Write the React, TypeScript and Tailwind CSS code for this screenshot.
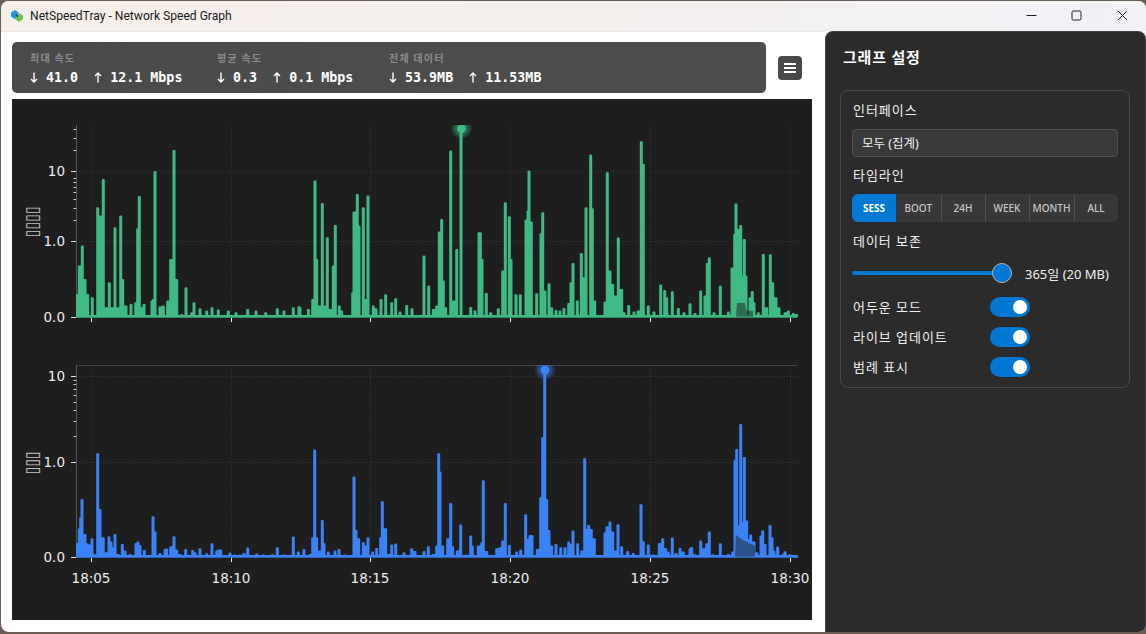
import React from "react";

type P = [number, number];
const map = (ox: number, oy: number, a: number[]): P[] => {
  const r: P[] = [];
  for (let i = 0; i < a.length; i += 2) r.push([ox + a[i] / 3, oy + a[i + 1] / 3]);
  return r;
};

const greenPts: P[] = [
  ...map(0, 200, [230,285,238,200,247,140,255,240,263,285,277,295,293,25,303,50,310,-60,320,325,328,250,335,325,345,85,353,325,362,50,368,240,378,320,393,315,407,310,413,88,418,-9,425,325,432,315,456,305,460,300,465,-84,480,322,490,320,503,305,512,180,522,-147,530,240,545,345,558,265,575,340,582,310,600,328,620,335,636,325,655,332,685,335,708,340,743,330,768,335,797,340,832,328,852,335,880,325,897,322]),
  ...map(300, 110, [0,595,25,600,38,570,45,215,50,450,60,590,67,282,72,590,82,385,90,600,100,470,106,348,118,590,125,605,158,550,162,308,172,255,177,350,190,295,197,570,204,260,220,590,228,598,243,570,257,556,275,580,287,568,300,608,320,588,336,598,372,440,386,530,400,600,410,590,418,368,425,330,430,515,437,595,452,125,460,575,470,420,483,20,512,594,525,605,537,370,541,370,546,450,559,552,572,610,595,598,608,485,616,280,628,322,633,450,648,556,661,556,678,332,684,305,687,185,694,338,710,553,723,373,728,310,735,545,747,523,755,595,768,603,780,605,792,597,806,582,813,520,819,462,832,575,844,432,852,505,858,295,872,137,877,298,884,575]),
  ...map(600, 110, [15,578,22,190,30,485,38,525,45,560,55,386,65,540,72,610,86,588,102,608,114,605,124,97,130,165,145,590,162,608,182,527,194,543,200,565,217,547,235,597,252,610,270,583,285,612,302,545,315,560,322,462,328,446,342,610,361,530,385,608,396,476,404,375,408,284,415,360,422,348,428,500,433,390,438,500,450,565,457,546,462,580,475,610,490,435,500,595,511,436,518,520,528,565,537,595,555,610,565,605,580,612,590,615]),
];

const bluePts: P[] = [
  ...map(0, 400, [232,432,238,388,242,355,246,300,250,440,255,405,262,433,270,437,276,418,285,466,293,163,300,330,310,415,320,460,327,412,333,428,338,445,345,405,355,465,367,435,375,455,390,465,408,432,414,428,420,438,433,453,445,468,459,352,465,398,480,462,495,450,500,449,512,442,522,412,530,452,540,465,557,450,578,453,585,460,600,448,620,463,636,433,650,455,655,452,662,452,690,461,703,467,720,467,732,462,743,446,770,464,790,467,817,466,832,445,850,467,880,413,895,458]),
  ...map(300, 400, [12,450,30,465,38,415,44,152,50,415,60,455,67,363,72,432,85,458,105,455,117,450,135,467,162,233,168,393,176,418,190,430,197,440,204,415,218,458,230,447,242,415,247,307,257,388,265,465,275,437,287,434,312,460,335,448,345,456,372,456,385,442,400,465,410,440,416,163,420,218,428,440,443,418,452,312,458,442,472,455,482,377,500,467,512,410,517,440,535,440,545,430,550,244,560,456,590,448,600,445,608,425,616,312,628,438,650,458,662,452,677,346,683,420,690,408,696,408,712,450,722,295,728,115,734,-90,740,300,747,393,755,440,768,435,782,445,795,445,806,428,812,435,819,395,833,433,845,455,854,178,860,390,866,378,874,390,883,418]),
  ...map(600, 400, [15,400,21,382,30,368,38,398,45,455,54,376,65,442,83,456,100,462,123,316,130,427,145,437,160,467,178,432,188,418,197,447,205,458,217,416,228,462,240,447,250,458,270,448,275,444,285,466,302,425,310,448,320,433,328,398,340,466,361,433,385,465,398,458,405,183,410,150,415,380,422,75,428,370,433,174,440,365,445,420,452,407,462,428,470,460,483,410,488,394,495,435,510,378,516,415,522,455,533,443,550,465,555,457,570,466,585,468,590,470]),
];

function build(pts: P[], base: number): P[] {
  const s = [...pts].sort((a, b) => a[0] - b[0]);
  const out: P[] = [[77, base]];
  let prev: P = [77, base - 1];
  const low = base - 1;
  for (const p of s) {
    if (p[0] - prev[0] > 3.4) {
      out.push([prev[0] + 0.4, low]);
      out.push([p[0] - 0.4, low]);
      out.push([p[0] - 0.4, p[1]]);
    } else if (p[1] < prev[1]) {
      out.push([p[0] - 0.4, prev[1]]);
      out.push([p[0] - 0.4, p[1]]);
    } else {
      out.push([prev[0] + 0.4, p[1]]);
      out.push([p[0] - 0.4, p[1]]);
    }
    out.push([p[0] + 0.4, p[1]]);
    prev = p;
  }
  out.push([prev[0] + 0.4, low], [797, low], [797, base]);
  return out;
}

const str = (p: P[]) => p.map((q) => `${q[0].toFixed(1)},${q[1].toFixed(1)}`).join(" ");

const DJ = "'DejaVu Sans', sans-serif";
const KR = "'Noto Sans', 'Noto Sans CJK KR', sans-serif";
const gridXs = [91.5, 231.5, 370.5, 510.5, 650.5, 790.5];

function Series(p: {
  id: string; top: number; base: number; color: string; pts: P[]; labels: [number, string][];
  minors: number[]; frame: boolean; tofu: string; tofuY: number; marker: P; xlabels: boolean; tofuLen: number; shade: string;
}) {
  const line = build(p.pts, p.base);
  return (
    <g>
      <clipPath id={p.id}><rect x="76" y={p.top} width="722" height={p.base - p.top + 2} /></clipPath>
      {gridXs.map((x) => (
        <line key={x} x1={x} x2={x} y1={p.top} y2={p.base} stroke="#383838" strokeWidth="1" strokeDasharray="1 2" />
      ))}
      {p.labels.slice(0, -1).map(([y]) => (
        <line key={y} x1={76} x2={797} y1={y + 0.5} y2={y + 0.5} stroke="#383838" strokeWidth="1" strokeDasharray="1 2" />
      ))}
      {p.frame && <line x1={76} x2={797} y1={p.top + 0.5} y2={p.top + 0.5} stroke="#444444" />}
      <line x1={76.5} x2={76.5} y1={p.top} y2={p.base} stroke="#555555" />
      {p.labels.map(([y, t]) => (
        <g key={t}>
          <line x1={71} x2={76} y1={y + 0.5} y2={y + 0.5} stroke="#e0e0e0" />
          <text x={65} y={y + 5} textAnchor="end" fontSize="13.5" fill="#ececec" fontFamily={DJ}>{t}</text>
        </g>
      ))}
      {p.minors.map((y) => (
        <line key={y} x1={73.5} x2={76} y1={y + 0.5} y2={y + 0.5} stroke="#d0d0d0" />
      ))}
      <g clipPath={`url(#${p.id})`}>
        <polygon points={str(line)} fill={p.color} />
        <polyline points={str(line)} fill="none" stroke={p.color} strokeWidth="2.2" strokeLinejoin="round" />
        <polygon points={p.shade} fill="#1e1e1e" fillOpacity="0.5" />
        <circle cx={p.marker[0]} cy={p.marker[1]} r="10" fill={p.color} fillOpacity="0.2" />
        <circle cx={p.marker[0]} cy={p.marker[1]} r="7.5" fill={p.color} fillOpacity="0.3" />
        <circle cx={p.marker[0]} cy={p.marker[1]} r="4.5" fill={p.color} />
      </g>
      <line x1={76} x2={797} y1={p.base + 0.25} y2={p.base + 0.25} stroke={p.color} strokeOpacity="0.7" strokeWidth="1.5" />
      {gridXs.map((x) => (
        <line key={x} x1={x} x2={x} y1={p.base + 1} y2={p.base + 5} stroke="#f0f0f0" />
      ))}
      <text
        x={0} y={0} fontSize="18" fill="#c4c4c4" fontFamily={DJ} textAnchor="middle"
        textLength={p.tofuLen} lengthAdjust="spacingAndGlyphs"
        transform={`translate(37.5 ${p.tofuY}) rotate(-90)`}
      >{p.tofu}</text>
      {p.xlabels && ["18:05", "18:10", "18:15", "18:20", "18:25", "18:30"].map((t, i) => (
        <text key={t} x={gridXs[i] - 0.5} y={p.base + 26} textAnchor="middle" fontSize="13.5" fill="#ececec" fontFamily={DJ}>{t}</text>
      ))}
    </g>
  );
}

function Arrow({ up }: { up?: boolean }) {
  return (
    <svg width="8" height="11" viewBox="0 0 8 11" className={`inline-block align-[-1px] ${up ? "rotate-180" : ""}`}>
      <path d="M4 0.5V10M1 7L4 10L7 7" fill="none" stroke="#ffffff" strokeWidth="1.4" />
    </svg>
  );
}

function Stat({ label, down, up, w }: { label: string; down: string; up: string; w: string }) {
  return (
    <div className={w}>
      <div className="text-[10px] leading-[14px] font-bold tracking-[1.25px] text-[#8c8c8c]" style={{ fontFamily: "'Noto Sans CJK KR', sans-serif" }}>{label}</div>
      <div className="mt-[4px] text-[13.33px] leading-[18px] font-semibold text-white whitespace-pre" style={{ fontFamily: "'DejaVu Sans Mono', monospace" }}>
        <Arrow />{` ${down}  `}<Arrow up />{` ${up}`}
      </div>
    </div>
  );
}

function Toggle({ label, mt }: { label: string; mt: string }) {
  return (
    <div className={`flex items-center ${mt}`}>
      <div className="w-[138px] pl-[1px] text-[13px] leading-[20px] tracking-[0.95px] text-[#f0f0f0]">{label}</div>
      <div className="w-[40px] h-[20px] rounded-full bg-[#0078d4] flex items-center justify-end pr-[3px]">
        <div className="w-[14px] h-[14px] rounded-full bg-white" />
      </div>
    </div>
  );
}

const segs: [string, string][] = [["BOOT", "w-[45.5px]"], ["24H", "w-[44px]"], ["WEEK", "w-[44px]"], ["MONTH", "w-[45px]"], ["ALL", "w-[43px]"]];

export default function App() {
  return (
    <div className="w-[1146px] h-[634px] bg-[#6b5e57] pt-[1px] pl-[1px] overflow-hidden" style={{ fontFamily: KR }}>
      <div className="w-[1145px] h-[631px] rounded-lg overflow-hidden bg-white flex flex-col">
        <div className="h-[30px] shrink-0 flex items-center bg-linear-to-r from-[#f7efe9] via-[#f5f0ee] to-[#f1f1f6]">
          <svg width="14" height="14" viewBox="0 0 14 14" className="ml-[9px]">
            <path d="M1 3.5 L5 1 L8.5 3.5 L8.5 6 L6 4.5 L6 9.5 L4.5 10 L1 7.5 Z" fill="#2398e0" />
            <path d="M6 4.5 L8.5 6 L8.5 9 L6 7.5 Z" fill="#0f4f78" />
            <path d="M9 4 L13 6.5 L13 10 L9 13 L5.5 10 L6 7.5 L8.5 9 L9 8.5 Z" fill="#6cc04a" />
          </svg>
          <div className="ml-[6px] text-[12.1px] leading-[16px] text-[#1a1a1a] w-[300px]" style={{ fontFamily: "Roboto, sans-serif" }}>NetSpeedTray - Network Speed Graph</div>
          <div className="flex-1" />
          <div className="w-[46px] h-[30px] flex items-center justify-center pb-[2px]">
            <svg width="11" height="11" viewBox="0 0 11 11"><path d="M0.5 5.5H10.5" stroke="#222" strokeWidth="1" /></svg>
          </div>
          <div className="w-[46px] h-[30px] flex items-center justify-center pb-[2px] pr-[1px]">
            <svg width="11" height="11" viewBox="0 0 11 11"><rect x="1" y="1" width="9" height="9" rx="1.2" fill="none" stroke="#222" strokeWidth="1" /></svg>
          </div>
          <div className="w-[46px] h-[30px] flex items-center justify-center pb-[2px] pr-[1px]">
            <svg width="11" height="11" viewBox="0 0 11 11"><path d="M1 1L10 10M10 1L1 10" stroke="#222" strokeWidth="1" /></svg>
          </div>
        </div>
        <div className="flex-1 flex min-h-0">
          <div className="w-[824px] shrink-0 pl-[11px] pt-[10px] border-t border-[#e8e8e8]">
            <div className="flex items-center h-[51px]">
              <div className="w-[754px] h-[51px] rounded-[5px] bg-linear-to-r from-[#4a4a4a] to-[#4d4d4d] flex pl-[18px] pt-[9px]">
                <Stat label="최대 속도" down="41.0" up="12.1 Mbps" w="w-[187px]" />
                <Stat label="평균 속도" down="0.3" up="0.1 Mbps" w="w-[172px]" />
                <Stat label="전체 데이터" down="53.9MB" up="11.53MB" w="w-[200px]" />
              </div>
              <button className="ml-[12px] w-[24px] h-[24px] mt-[1px] rounded-[4px] bg-[#4a4a4a] flex flex-col items-center justify-center gap-[1.5px]">
                <span className="block w-[12px] h-[2.5px] bg-white" />
                <span className="block w-[12px] h-[2.5px] bg-white" />
                <span className="block w-[12px] h-[2.5px] bg-white" />
              </button>
            </div>
            <div className="mt-[6px] w-[800px] h-[521px] bg-[#1e1e1e]">
              <svg width="800" height="521" viewBox="12 99 800 521" className="block">
                <Series id="cg" top={125} base={317} color="#3fba84" pts={greenPts}
                  labels={[[171, "10"], [241, "1.0"], [317, "0.0"]]}
                  minors={[220, 208, 199, 192, 187, 182, 178, 150, 138, 129]}
                  frame={false} tofu="▯▯▯▯" tofuY={222} tofuLen={31} marker={[461.5, 128.5]} xlabels={false}
                  shade="736,317 737,303 745,303 746,310 753,311 753,317" />
                <Series id="cb" top={365} base={557} color="#3b82f6" pts={bluePts}
                  labels={[[376, "10"], [462, "1.0"], [557, "0.0"]]}
                  minors={[436, 421, 410, 402, 395, 389, 384, 380]}
                  frame={true} tofu="▯▯▯" tofuY={463} tofuLen={23} marker={[545, 370]} xlabels={true}
                  shade="735,557 736,535 743,540 755,546 755,557" />
              </svg>
            </div>
          </div>
          <div className="flex-1 rounded-t-lg bg-[#2b2b2b] border border-[#444444] border-b-0 pl-[14px] pr-[14px] text-[#f0f0f0]">
            <div className="mt-[15px] text-[15px] leading-[20px] font-bold tracking-[0.8px] ml-[3px] text-white">그래프 설정</div>
            <div className="mt-[23px] w-[290px] h-[298px] rounded-lg border border-[#484848] px-[11px] pt-[9px]">
              <div className="pl-[1px] text-[13px] leading-[20px] tracking-[0.95px]">인터페이스</div>
              <div className="mt-[9px] h-[28px] rounded-[4px] bg-[#3a3a3a] border border-[#505050] pl-[9px] text-[12.5px] leading-[27px] w-[266px]">모두 (집계)</div>
              <div className="mt-[8px] pl-[1px] text-[13px] leading-[20px] tracking-[0.95px]">타임라인</div>
              <div className="mt-[9px] h-[28px] w-[266px] rounded-[6px] bg-[#383838] flex overflow-hidden text-[10px] font-medium leading-[28px] text-center text-[#c8c8c8]">
                <div className="w-[44px] bg-[#0078d4] text-white font-bold">SESS</div>
                {segs.map(([t, w], i) => (
                  <div key={t} className={`${w} ${i < 4 ? "border-r border-[#505050]" : ""}`}>{t}</div>
                ))}
              </div>
              <div className="mt-[9px] pl-[1px] text-[13px] leading-[20px] tracking-[0.95px]">데이터 보존</div>
              <div className="mt-[11px] h-[21px] flex items-center">
                <div className="relative w-[150px] h-[4px] rounded-full bg-[#0078d4]">
                  <div className="absolute right-[-10px] top-[-8px] w-[20px] h-[20px] rounded-full bg-[#0078d4] border border-[#b8b8b8]" />
                </div>
                <div className="ml-[23px] text-[13px] leading-[18px] mt-[2px] whitespace-nowrap">365일 (20 MB)</div>
              </div>
              <Toggle label="어두운 모드" mt="mt-[14px]" />
              <Toggle label="라이브 업데이트" mt="mt-[10px]" />
              <Toggle label="범례 표시" mt="mt-[10px]" />
            </div>
          </div>
        </div>
      </div>
    </div>
  );
}
